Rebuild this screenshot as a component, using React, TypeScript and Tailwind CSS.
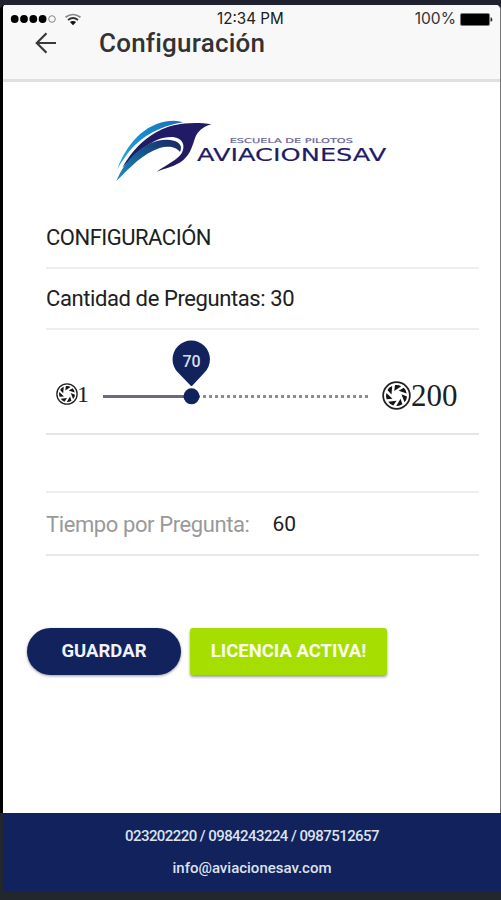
import React from "react";

const blades = [0, 1, 2, 3, 4, 5, 6];

function Aperture({ size }: { size: number }) {
  return (
    <svg width={size} height={size} viewBox="0 0 28 28" className="block shrink-0">
      <circle cx="14" cy="14" r="12.9" fill="#fff" stroke="#222" strokeWidth="1.7" />
      {blades.map((i) => (
        <path key={i} d="M11.2 9.9 L11.2 4.2 Q14.3 3.2 17.3 4.5 Z" fill="#151515" transform={`rotate(${(i * 360) / 7 + 8} 14 14)`} />
      ))}
    </svg>
  );
}

function Logo() {
  return (
    <svg width="290" height="80" viewBox="0 0 870 240" className="block">
      <defs>
        <linearGradient id="sky" x1="0" y1="1" x2="1" y2="0">
          <stop offset="0" stopColor="#27a8df" />
          <stop offset=".6" stopColor="#1689cc" />
          <stop offset="1" stopColor="#1b6fb0" />
        </linearGradient>
        <linearGradient id="wing" x1="0" y1="1" x2="1" y2="0">
          <stop offset="0" stopColor="#238fc6" />
          <stop offset=".5" stopColor="#155b91" />
          <stop offset="1" stopColor="#1c2461" />
        </linearGradient>
      </defs>
      <path d="M37 178 C62 106 119 38 196 33 Q217 31 235 37 C162 48 97 85 60 142 Q46 160 37 178Z" fill="url(#sky)" />
      <path
        d="M52 173 C88 110 140 62 207 46 C243 37 286 37 319 43 C292 51 279 64 271 82 C263 104 258 130 236 149 C211 170 180 174 155 185 C186 164 216 150 230 130 C242 107 234 84 204 81 C146 77 98 128 52 173Z"
        fill="#211b65"
      />
      <path d="M34 213 C60 150 115 91 184 89 C218 89 236 104 225 126 C213 109 188 107 164 114 C114 130 76 172 34 213Z" fill="url(#wing)" />
      <g className="font-['DejaVu_Sans',sans-serif]">
        <text x="374" y="99" fontSize="20" textLength="370" lengthAdjust="spacingAndGlyphs" fill="#65629b" stroke="#65629b" strokeWidth=".5">
          ESCUELA DE PILOTOS
        </text>
        <text x="276" y="152" fontSize="51" textLength="568" lengthAdjust="spacingAndGlyphs" fill="#211b65" stroke="#211b65" strokeWidth=".5">
          AVIACIONESAV
        </text>
      </g>
    </svg>
  );
}

export default function App() {
  return (
    <div className="flex h-[900px] w-[501px] flex-col overflow-hidden bg-[#22272d] font-['Roboto',sans-serif] text-[#202020]">
      <div className="h-[5px] shrink-0 bg-[#20222f]" />
      <div className="flex h-[808px] shrink-0 flex-col overflow-hidden rounded-t-[5px] border-l-[3px] border-r border-l-black border-r-[#777] bg-white">
        <header className="h-[77px] shrink-0 border-b-[3px] border-[#dfdfdf] bg-[#f8f8f8]">
          <div className="flex h-[25px] items-center pr-[7px] pt-[3px]">
            <div className="ml-[7px] flex w-[207px] items-center">
              <svg width="46" height="12" viewBox="0 0 46 12" className="block">
                <g fill="#000">
                  <circle cx="4.7" cy="6" r="3.9" />
                  <circle cx="14" cy="6" r="3.9" />
                  <circle cx="23.3" cy="6" r="3.9" />
                  <circle cx="32.6" cy="6" r="3.9" />
                </g>
                <circle cx="42" cy="6" r="3.3" fill="none" stroke="#777" strokeWidth=".9" />
              </svg>
              <svg width="18" height="13" viewBox="0 0 18 13" className="ml-[8px] block" fill="none">
                <path d="M1.5 4.2Q9-1.2 16.5 4.2" stroke="#888" strokeWidth="1.7" />
                <path d="M4 7Q9 3 14 7" stroke="#333" strokeWidth="1.8" />
                <path d="M5.9 9Q9 6.8 12.1 9L9 12.2Z" fill="#111" />
              </svg>
            </div>
            <span className="whitespace-nowrap font-['Inter',sans-serif] text-[15.2px]">12:34 PM</span>
            <div className="ml-auto flex items-center gap-[4px]">
              <span className="font-['Inter',sans-serif] text-[15.6px] text-[#333]">100%</span>
              <svg width="33" height="13" viewBox="0 0 33 13" className="block">
                <rect x=".5" y=".5" width="29" height="12" rx="1.5" fill="#000" stroke="#777" />
                <path d="M30.5 4.5h1.2q1.3 2 0 4h-1.2Z" fill="#333" />
              </svg>
            </div>
          </div>
          <div className="flex h-[27px] items-center">
            <svg width="22" height="22" viewBox="0 0 22 22" className="ml-[32px] mt-[-2px] block" fill="none" stroke="#3a3a3a" strokeWidth="2.2">
              <path d="M21 11H2M11.5 1.3L1.8 11L11.5 20.7" />
            </svg>
            <h1 className="ml-[42px] text-[26px] font-medium leading-[27px] tracking-[0.22px] text-[#333]">Configuración</h1>
          </div>
        </header>

        <div className="ml-[102px] mt-[28px] h-[80px] w-[290px] shrink-0">
          <Logo />
        </div>

        <main className="ml-[43px] mr-[21px] mt-[17px] flex flex-col">
          <div className="flex h-[62px] items-center border-b-2 border-[#eee] pt-[2px] text-[22px] leading-none">
            <span className="tracking-[-0.5px]">CONFIGURACIÓN</span>
          </div>
          <div className="flex h-[61px] items-center border-b-2 border-[#eee] text-[22px] leading-none">
            <span className="tracking-[-0.4px]">Cantidad de Preguntas: 30</span>
          </div>
          <div className="relative flex h-[105px] items-center border-b-2 border-[#e5e5e5] pt-[29px] font-['Liberation_Serif',serif]">
            <div className="mt-[-4px] flex w-[57px] items-center pl-[10px]">
              <Aperture size={22} />
              <span className="ml-[-1px] text-[24px] leading-none">1</span>
            </div>
            <div className="h-[3px] w-[88px] bg-[#6c6783]" />
            <div className="h-0 w-[177px] border-t-[3px] border-dotted border-[#8c8c8c]" />
            <div className="ml-[14px] mt-[-2px] flex items-center">
              <Aperture size={29} />
              <span className="text-[31px] leading-none">200</span>
            </div>
            <svg width="40" height="68" viewBox="0 0 40 68" className="absolute left-[125px] top-[10px]">
              <path d="M20 46L7 32.5A18.7 18.7 0 1 1 33.5 32.5L21 46Z" fill="#11225c" />
              <circle cx="20.5" cy="56.3" r="8" fill="#11225c" />
              <text x="20.5" y="27" textAnchor="middle" fontSize="16" fontWeight="500" fill="#d8ddec" className="font-['Roboto',sans-serif]">
                70
              </text>
            </svg>
          </div>
          <div className="h-[58px] border-b-2 border-[#eee]" />
          <div className="flex h-[63px] items-center border-b-2 border-[#e8e8e8] pt-[2px] text-[22px] leading-none">
            <span className="tracking-[-0.4px] text-[#999]">Tiempo por Pregunta:</span>
            <span className="ml-[23px] text-[21px]">60</span>
          </div>
        </main>

        <div className="ml-[24px] mt-[72px] flex items-start gap-[9px] text-[18.5px] font-bold">
          <button className="h-[47px] w-[154px] rounded-full bg-[#11225c] text-[#f0f2fa] shadow-[0_1px_3px_#0006]">GUARDAR</button>
          <button className="h-[47px] w-[197px] whitespace-nowrap rounded-[3px] bg-[#a5de00] text-[#faffed] shadow-[0_2px_3px_#0006]">LICENCIA ACTIVA!</button>
        </div>
      </div>

      <footer className="ml-[3px] flex h-[79px] shrink-0 flex-col items-center bg-[#11225c] pt-[12px] text-[15px] font-medium leading-[22px] text-[#dde1ef]">
        <p className="tracking-[-0.57px]">023202220 / 0984243224 / 0987512657</p>
        <p className="mt-[10px]">info@aviacionesav.com</p>
      </footer>
    </div>
  );
}
